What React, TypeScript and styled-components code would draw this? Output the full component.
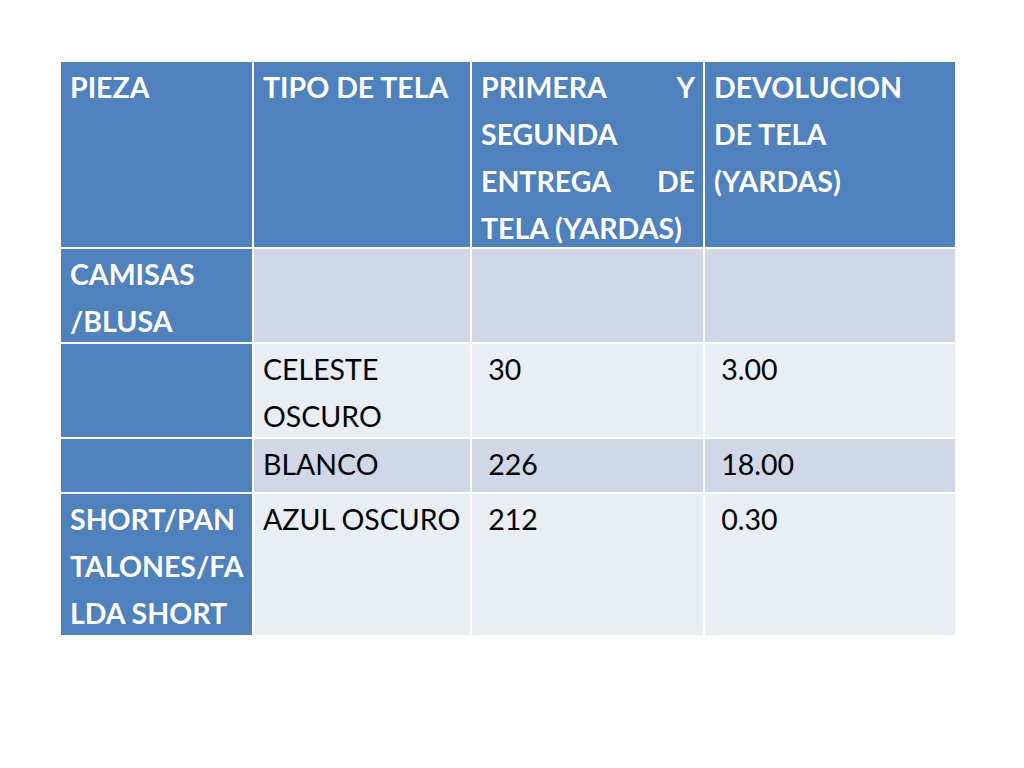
import styled, { createGlobalStyle } from "styled-components";

const GlobalStyle = createGlobalStyle`
  html, body {
    margin: 0;
    padding: 0;
    background: #ffffff;
  }
  body {
    font-family: "Lato", "Open Sans", "Liberation Sans", sans-serif;
  }
`;

const Page = styled.div`
  width: 1024px;
  height: 768px;
  padding: 62px 0 0 61px;
  box-sizing: border-box;
  background: #ffffff;
`;

const Table = styled.div`
  display: grid;
  grid-template-columns: 191px 216px 231px 250px;
  grid-template-rows: 185px 93px 93px 53px 141px;
  column-gap: 2px;
  row-gap: 2px;
  width: 894px;
  background: #ffffff;
`;

type Kind = "head" | "side" | "dark" | "light";
type CellProps = { $kind: Kind; $justify?: boolean };

const colours: Record<Kind, string> = {
  head: "#4f81bd",
  side: "#4f81bd",
  dark: "#d0d8e8",
  light: "#e9edf4",
};

const Cell = styled.div<CellProps>`
  background: ${(p) => colours[p.$kind]};
  color: ${(p) => (p.$kind === "head" || p.$kind === "side" ? "#ffffff" : "#000000")};
  font-weight: ${(p) => (p.$kind === "head" || p.$kind === "side" ? 700 : 400)};
  font-size: 28.5px;
  line-height: 47px;
  padding: 2px 8px 0 9px;
  white-space: pre-wrap;
  text-align: ${(p) => (p.$justify ? "justify" : "left")};
  overflow: hidden;
  box-sizing: border-box;
`;

const HeadCell = styled(Cell)`
  border-bottom: 1px solid #ffffff;
  margin-bottom: -1px;
`;

const rows: { kind: "dark" | "light"; cells: string[] }[] = [
  { kind: "dark", cells: ["CAMISAS /BLUSA", "", "", ""] },
  { kind: "light", cells: ["", "CELESTE OSCURO", " 30", " 3.00"] },
  { kind: "dark", cells: ["", "BLANCO", " 226", " 18.00"] },
  { kind: "light", cells: ["SHORT/PAN TALONES/FA LDA SHORT", "AZUL OSCURO", " 212", " 0.30"] },
];

export default function App() {
  return (
    <>
      <GlobalStyle />
      <Page>
        <Table>
          <HeadCell $kind="head">PIEZA</HeadCell>
          <HeadCell $kind="head">TIPO DE TELA</HeadCell>
          <HeadCell $kind="head" $justify>
            PRIMERA Y SEGUNDA ENTREGA DE TELA (YARDAS)
          </HeadCell>
          <HeadCell $kind="head">
            DEVOLUCION
            <br />
            DE TELA
            <br />
            (YARDAS)
          </HeadCell>
          {rows.map((row, r) =>
            row.cells.map((text, c) => (
              <Cell key={`${r}-${c}`} $kind={c === 0 ? "side" : row.kind}>
                {c === 0 && r === 3 ? (
                  <>
                    SHORT/PAN
                    <br />
                    TALONES/FA
                    <br />
                    LDA SHORT
                  </>
                ) : (
                  text
                )}
              </Cell>
            ))
          )}
        </Table>
      </Page>
    </>
  );
}
